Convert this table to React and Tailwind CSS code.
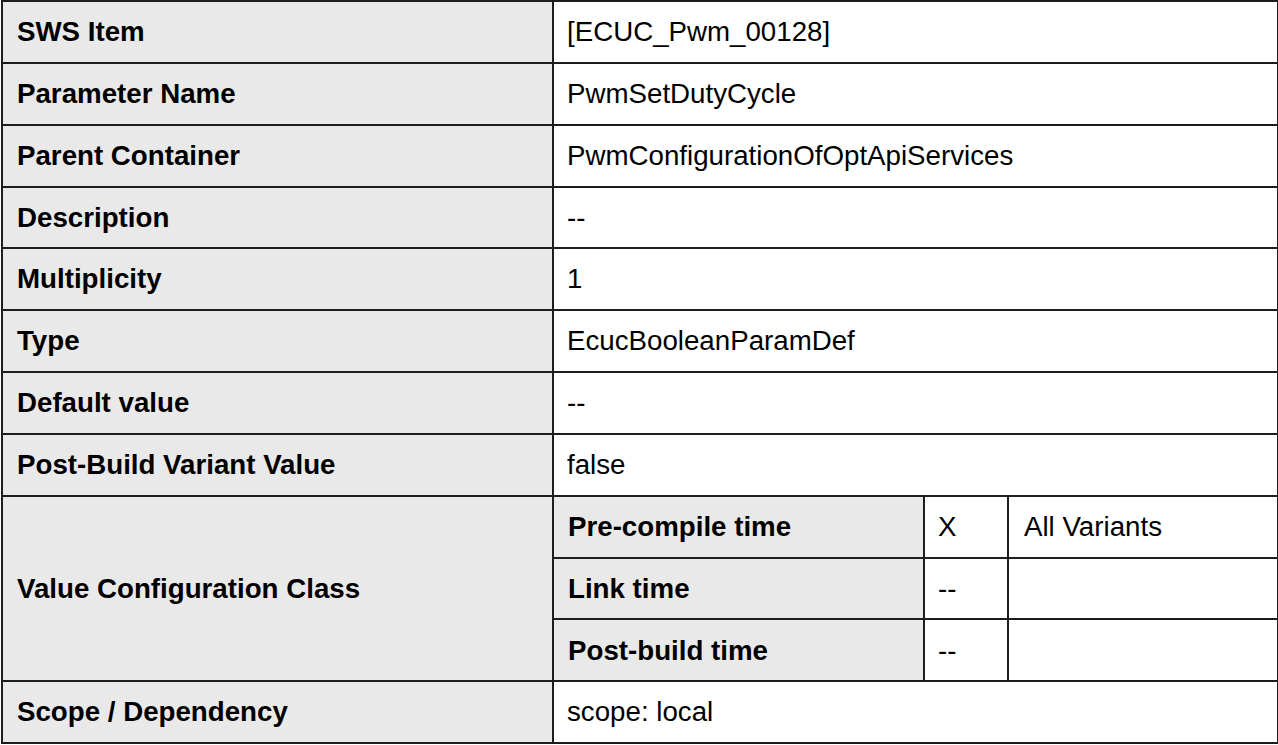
export default function App() {
  const rows = [
    ['SWS Item', '[ECUC_Pwm_00128]'],
    ['Parameter Name', 'PwmSetDutyCycle'],
    ['Parent Container', 'PwmConfigurationOfOptApiServices'],
    ['Description', '--'],
    ['Multiplicity', '1'],
    ['Type', 'EcucBooleanParamDef'],
    ['Default value', '--'],
    ['Post-Build Variant Value', 'false'],
  ];
  const cell = 'border-2 border-[#1e1e1e] h-[61.85px] align-middle';
  const head = `${cell} bg-[#e9e9e9] font-bold pl-[14px]`;
  const body = `${cell} bg-white pl-[13px]`;

  return (
    <div
      className="w-[1278px] h-[745px] bg-white text-black text-[27.7px] leading-none overflow-hidden"
      style={{ fontFamily: '"Liberation Sans", Arial, sans-serif' }}
    >
      <table className="border-collapse table-fixed w-[1276px] ml-px">
        <colgroup>
          <col className="w-[551px]" />
          <col className="w-[371px]" />
          <col className="w-[84px]" />
          <col className="w-[270px]" />
        </colgroup>
        <tbody>
          {rows.map(([k, v]) => (
            <tr key={k}>
              <td className={head}>{k}</td>
              <td className={body} colSpan={3}>{v}</td>
            </tr>
          ))}
          <tr>
            <td className={head} rowSpan={3}>Value Configuration Class</td>
            <td className={head}>Pre-compile time</td>
            <td className={body}>X</td>
            <td className={`${body} pl-[15px]`}>All Variants</td>
          </tr>
          <tr>
            <td className={head}>Link time</td>
            <td className={body}>--</td>
            <td className={body}></td>
          </tr>
          <tr>
            <td className={head}>Post-build time</td>
            <td className={body}>--</td>
            <td className={body}></td>
          </tr>
          <tr>
            <td className={head}>Scope / Dependency</td>
            <td className={body} colSpan={3}>scope: local</td>
          </tr>
        </tbody>
      </table>
    </div>
  );
}
